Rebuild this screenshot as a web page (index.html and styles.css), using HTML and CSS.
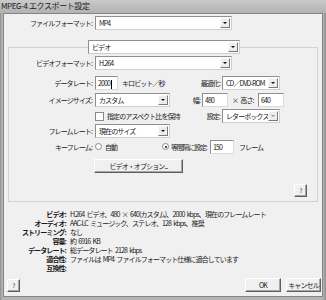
FILE: index.html
```html
<!DOCTYPE html>
<html lang="ja">
<head>
<meta charset="utf-8">
<title>MPEG-4 エクスポート設定</title>
<link rel="stylesheet" href="styles.css">
</head>
<body>
<div class="win">
  <div class="title">MPEG-4 エクスポート設定</div>
  <div class="body">
    <div class="row r-file">
      <span class="lbl lbl-top">ファイルフォーマット:</span>
      <div class="sel w137"><span class="val">MP4</span><i class="arr"></i></div>
    </div>

    <fieldset class="grp">
      <legend class="lg"><div class="sel w152"><span class="val">ビデオ</span><i class="arr"></i></div></legend>

      <div class="row r1">
        <span class="lbl">ビデオフォーマット:</span>
        <div class="sel w137"><span class="val">H.264</span><i class="arr"></i></div>
      </div>

      <div class="row r2">
        <span class="lbl">データレート:</span>
        <div class="inp w23">2000<b class="caret"></b></div>
        <span class="txt unit">キロビット／秒</span>
        <span class="rlbl w20">最適化:</span>
        <div class="sel w58"><span class="val">CD／DVD-ROM</span><i class="arr"></i></div>
      </div>

      <div class="row r3">
        <span class="lbl">イメージサイズ:</span>
        <div class="sel w75"><span class="val">カスタム</span><i class="arr"></i></div>
        <span class="rlbl w30">幅:</span>
        <div class="inp w26">480</div>
        <span class="txt times">× 高さ:</span>
        <div class="inp w26">640</div>
      </div>

      <div class="row r4">
        <span class="lbl"></span>
        <i class="chk"></i>
        <span class="txt aspect">指定のアスペクト比を保持</span>
        <span class="rlbl w20">設定:</span>
        <div class="sel w58 dis"><span class="val">レターボックス</span><i class="arr"></i></div>
      </div>

      <div class="row r5">
        <span class="lbl">フレームレート:</span>
        <div class="sel w75"><span class="val">現在のサイズ</span><i class="arr"></i></div>
      </div>

      <div class="row r6">
        <span class="lbl">キーフレーム:</span>
        <i class="rad"></i>
        <span class="txt auto">自動</span>
        <i class="rad on"></i>
        <span class="txt every">等間隔に設定:</span>
        <div class="inp w24">150</div>
        <span class="txt frm">フレーム</span>
      </div>

      <div class="row r7">
        <span class="lbl"></span>
        <div class="btn w89">ビデオ・オプション...</div>
      </div>

      <div class="row r8">
        <div class="btn q">?</div>
      </div>
    </fieldset>

    <div class="sum">
      <span class="sk">ビデオ:</span><span class="sv">H.264 ビデオ、480 × 640(カスタム)、2000 kbps、現在のフレームレート</span>
      <span class="sk">オーディオ:</span><span class="sv">AAC-LC ミュージック、ステレオ、128 kbps、推奨</span>
      <span class="sk">ストリーミング:</span><span class="sv">なし</span>
      <span class="sk">容量:</span><span class="sv">約 6916 KB</span>
      <span class="sk">データレート:</span><span class="sv">総データレート 2128 kbps</span>
      <span class="sk">適合性:</span><span class="sv">ファイルは MP4 ファイルフォーマット仕様に適合しています</span>
      <span class="sk">互換性:</span><span class="sv"></span>
    </div>

    <div class="foot">
      <div class="btn q">?</div>
      <div class="spacer"></div>
      <div class="btn ok">OK</div>
      <div class="btn cancel">キャンセル</div>
    </div>
  </div>
</div>
</body>
</html>
```

FILE: styles.css
```css
* { box-sizing: border-box; }
html, body { margin: 0; padding: 0; }
body {
  width: 326px;
  height: 300px;
  overflow: hidden;
  font-family: "Noto Sans CJK JP", "DejaVu Sans", sans-serif;
  font-size: 7px;
  letter-spacing: -0.9px;
  word-spacing: 1.6px;
  color: #1a1a1a;
  background: #9a9a9a;
}
.win {
  width: 326px;
  height: 300px;
  display: flex;
  flex-direction: column;
  padding: 0 3px 3px 3px;
  background: linear-gradient(90deg, #8e8e8e, #b4b4b4 2px, #b4b4b4 323px, #8e8e8e);
}
.title {
  height: 13px;
  line-height: 12px;
  font-size: 8px;
  letter-spacing: -0.4px;
  word-spacing: 0;
  color: #1a1a1a;
  margin: 0 -3px;
  padding-left: 1px;
  background: linear-gradient(#cacaca, #b2b2b2);
}
.body {
  flex: 1;
  display: flex;
  flex-direction: column;
  background: #f0f0f0;
  border: 1px solid #858585;
}
.row {
  display: flex;
  align-items: center;
  white-space: nowrap;
}
.lbl {
  width: 83px;
  margin-right: 3px;
  text-align: right;
  flex: none;
}
.lbl-top { width: 88px; }
.r-file { margin-top: 2px; height: 14px; }

/* select */
.sel {
  position: relative;
  height: 14px;
  background: #fff;
  border: 1px solid #8f8f8f;
  border-right-color: #cfcfcf;
  border-bottom-color: #cfcfcf;
  display: flex;
  align-items: center;
  flex: none;
}
.sel .val { padding-left: 3px; flex: 1; overflow: hidden; }
.arr {
  width: 10px;
  height: 10px;
  margin-right: 1px;
  background: #ececec;
  border: 1px solid;
  border-color: #fafafa #7a7a7a #7a7a7a #fafafa;
  position: relative;
  flex: none;
}
.arr::after {
  content: "";
  position: absolute;
  left: 2px;
  top: 3px;
  border-left: 2px solid transparent;
  border-right: 2px solid transparent;
  border-top: 2px solid #111;
}
.sel.dis .arr::after { border-top-color: #9a9a9a; }

.w137 { width: 137px; }
.w152 { width: 152px; }
.w75 { width: 75px; }
.w58 { width: 58px; }
.w89 { width: 89px; }
.w20 { width: 20px; }
.w30 { width: 30px; }
.w23 { width: 23px; }
.w24 { width: 24px; }
.w26 { width: 26px; }

.inp {
  height: 14px;
  background: #fff;
  border: 1px solid #8f8f8f;
  border-right-color: #dadada;
  border-bottom-color: #dadada;
  padding-left: 2px;
  line-height: 12px;
  flex: none;
}
.caret {
  display: inline-block;
  width: 1px;
  height: 9px;
  background: #000;
  vertical-align: middle;
  margin-left: 1px;
}
.rlbl { text-align: right; margin-right: 2px; flex: none; }
.txt { flex: none; }

/* group */
.grp {
  margin: 10px 4px 0 4px;
  padding: 0 0 2px 0;
  border: 1px solid #d2d2d2;
  height: 162px;
  min-width: 0;
}
.lg {
  margin-left: 79px;
  padding: 0;
}
.r1 { margin-top: 2px; height: 14px; }
.r2 { margin-top: 6px; height: 14px; }
.unit { width: 78px; margin-left: 4px; }
.r3 { margin-top: 3px; height: 14px; }
.times { width: 25px; margin-left: 4px; margin-right: 1px; }
.r4 { margin-top: 3px; height: 12px; }
.chk {
  width: 9px;
  height: 9px;
  background: #fff;
  border: 1px solid #8a8a8a;
  flex: none;
}
.aspect { width: 93px; margin-left: 3px; }
.r5 { margin-top: 2px; height: 14px; }
.r6 { margin-top: 2px; height: 13px; }
.rad {
  width: 7px;
  height: 7px;
  border-radius: 50%;
  border: 1px solid #8a8a8a;
  background: #fff;
  flex: none;
  position: relative;
}
.rad.on::after {
  content: "";
  position: absolute;
  left: 1.5px;
  top: 1.5px;
  width: 2px;
  height: 2px;
  border-radius: 50%;
  background: #111;
}
.auto { width: 57px; margin-left: 3px; }
.every { width: 39px; margin-left: 2px; letter-spacing: -1.2px; }
.frm { margin-left: 5px; }
.r7 { margin-top: 6px; height: 14px; }
.r7 .lbl { width: 82px; }
.r8 { margin-top: 11px; height: 13px; justify-content: flex-end; padding-right: 10px; }

.btn {
  height: 14px;
  background: #f0f0f0;
  border: 1px solid;
  border-color: #ffffff #5e5e5e #5e5e5e #ffffff;
  box-shadow: inset -1px -1px 0 #a6a6a6;
  display: flex;
  align-items: center;
  justify-content: center;
  flex: none;
}
.btn.q { width: 13px; height: 13px; font-size: 6px; }

/* summary */
.sum {
  margin-top: 8px;
  display: grid;
  grid-template-columns: 62px 1fr;
  column-gap: 4px;
  line-height: 9px;
  white-space: nowrap;
}
.sk { text-align: right; font-weight: bold; }

.foot {
  margin-top: auto;
  display: flex;
  align-items: center;
  padding: 0 1px 4px 3px;
  height: 18px;
}
.spacer { flex: 1; }
.ok { width: 36px; }
.cancel { width: 35px; margin-left: 5px; }
```
